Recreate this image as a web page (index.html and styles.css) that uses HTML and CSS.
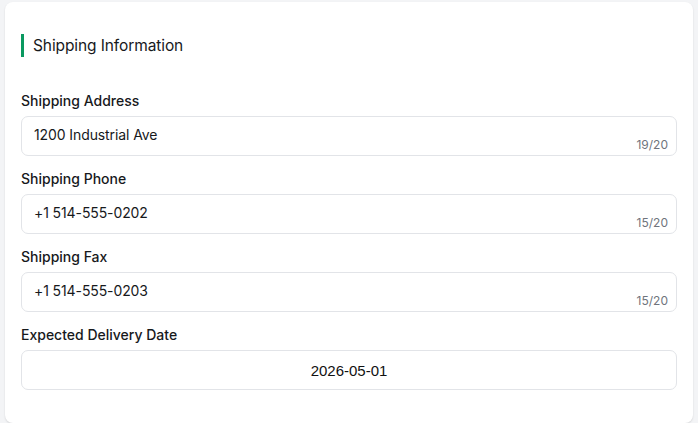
FILE: index.html
```html
<!DOCTYPE html>
<html lang="en">
<head>
    <meta charset="UTF-8">
    <meta name="viewport" content="width=device-width, initial-scale=1.0">
    <title>Shipping Information</title>
    <link rel="stylesheet" href="styles.css">
</head>
<body>
    <div class="card">
        <h2 class="section-title">Shipping Information</h2>

        <div class="field">
            <label class="field-label">Shipping Address</label>
            <div class="input-box">
                <span class="input-value">1200 Industrial Ave</span>
                <span class="counter">19/20</span>
            </div>
        </div>

        <div class="field">
            <label class="field-label">Shipping Phone</label>
            <div class="input-box">
                <span class="input-value">+1 514-555-0202</span>
                <span class="counter">15/20</span>
            </div>
        </div>

        <div class="field">
            <label class="field-label">Shipping Fax</label>
            <div class="input-box">
                <span class="input-value">+1 514-555-0203</span>
                <span class="counter">15/20</span>
            </div>
        </div>

        <div class="field">
            <label class="field-label">Expected Delivery Date</label>
            <div class="input-box date-box">
                <span class="date-value">2026-05-01</span>
            </div>
        </div>
    </div>
</body>
</html>
```

FILE: styles.css
```css
body {
    margin: 0;
    padding: 2px 5px 0;
    background: #f3f4f6;
    font-family: Inter, "Noto Sans", sans-serif;
    color: #17191c;
}
.card {
    background: #fff;
    border-radius: 8px;
    padding: 32px 16px 33px;
    box-shadow: 0 1px 2px rgba(0,0,0,0.12);
}
.section-title {
    margin: 0 0 34px;
    font-size: 15.5px;
    font-weight: 400;
    line-height: 23px;
    letter-spacing: -0.1px;
    border-left: 3px solid #0a9960;
    padding-left: 9px;
}
.field {
    margin-bottom: 13px;
}
.field:last-child {
    margin-bottom: 0;
}
.field-label {
    display: block;
    font-size: 14px;
    font-weight: 500;
    line-height: 20px;
    margin-bottom: 5px;
}
.input-box {
    position: relative;
    height: 38px;
    border: 1px solid #e2e4e8;
    border-radius: 7px;
    display: flex;
    align-items: center;
    padding: 0 12px;
}
.input-value {
    font-size: 14px;
    letter-spacing: -0.1px;
    margin-top: -3px;
}
.counter {
    position: absolute;
    right: 8px;
    bottom: 3px;
    font-size: 12px;
    color: #6f747c;
}
.date-box {
    justify-content: center;
}
.date-value {
    font-family: "Liberation Sans", Arial, sans-serif;
    font-size: 15px;
    color: #111;
}
```
